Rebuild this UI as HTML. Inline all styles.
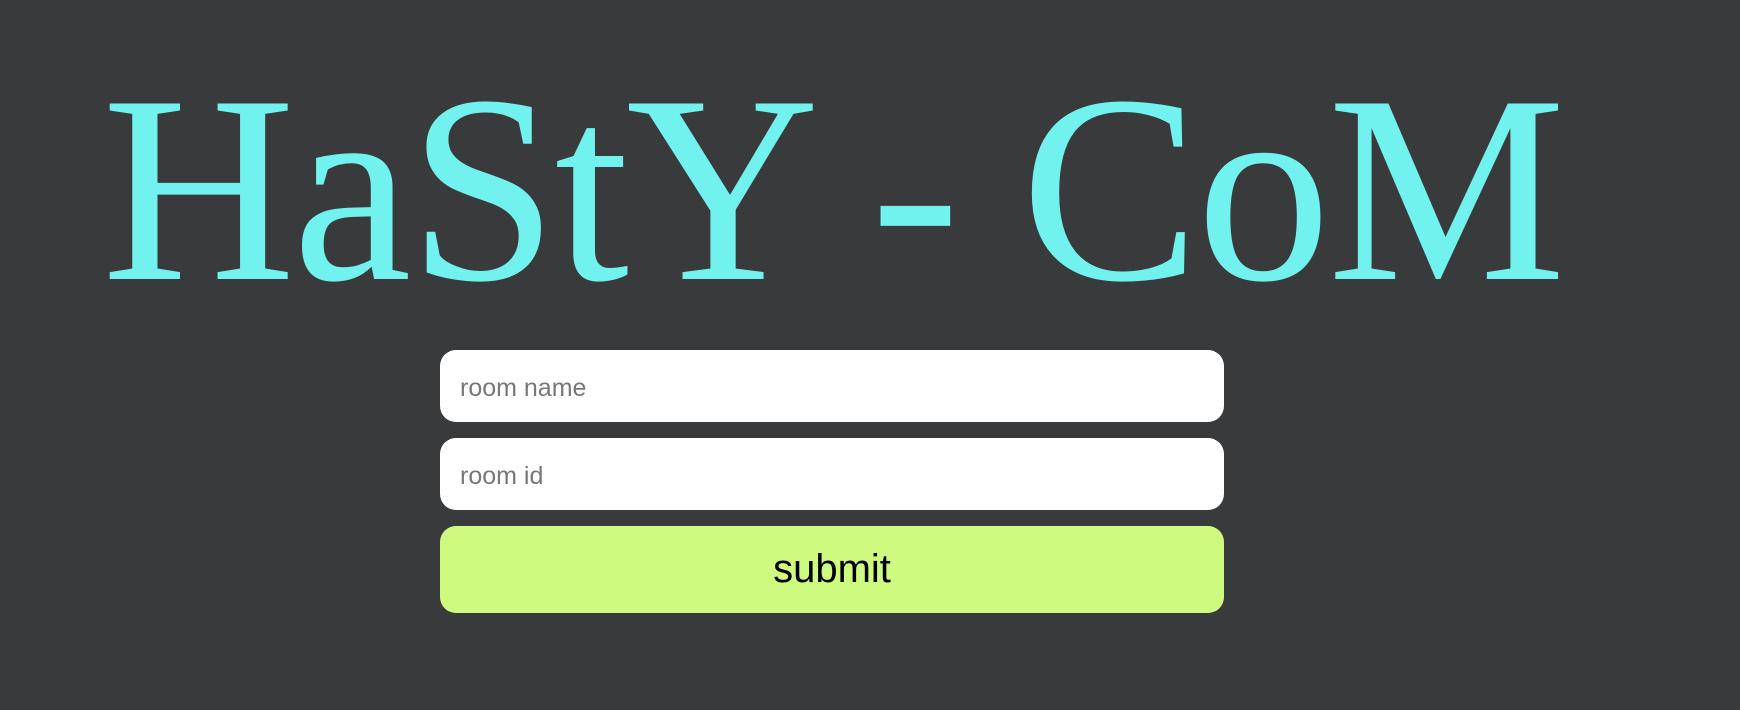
<!DOCTYPE html>
<html><head><meta charset="utf-8"><style>
html,body{margin:0;padding:0;}
body{width:1740px;height:710px;background:#393a3c;position:relative;overflow:hidden;}
.t{position:absolute;left:102px;top:35px;font-family:"Liberation Serif",serif;font-size:268px;letter-spacing:-3px;line-height:normal;color:#72f2ee;white-space:nowrap;}
.in{position:absolute;left:440px;width:784px;background:#fff;border-radius:16px;font-family:"Liberation Sans",sans-serif;font-size:25px;color:#777;box-sizing:border-box;padding-left:20px;padding-top:4px;display:flex;align-items:center;}
.btn{position:absolute;left:440px;top:526px;width:784px;height:87px;background:#cffa80;border-radius:16px;font-family:"Liberation Sans",sans-serif;font-size:40px;color:#000;display:flex;align-items:center;justify-content:center;}
</style></head><body>
<div class="t">HaStY - CoM</div>
<div class="in" style="top:350px;height:72px;">room name</div>
<div class="in" style="top:438px;height:72px;">room id</div>
<div class="btn">submit</div>
</body></html>
